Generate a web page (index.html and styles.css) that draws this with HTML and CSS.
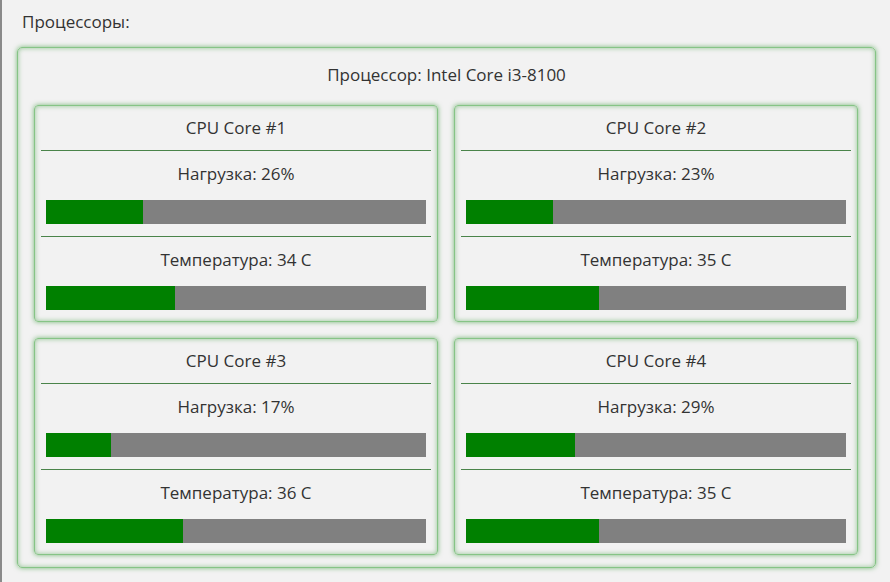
FILE: index.html
```html
<!DOCTYPE html>
<html lang="ru">
<head>
<meta charset="utf-8">
<link rel="stylesheet" href="styles.css">
</head>
<body>
<div class="page">
  <div class="heading">Процессоры:</div>
  <div class="cpu">
    <div class="cpu-title">Процессор: Intel Core i3-8100</div>
    <div class="cores">
      <div class="core">
        <div class="core-title">CPU Core #1</div>
        <div class="metric">
          <div class="label">Нагрузка: 26%</div>
          <div class="bar"><div class="fill" style="width:25.5%"></div></div>
        </div>
        <div class="metric">
          <div class="label">Температура: 34 C</div>
          <div class="bar"><div class="fill" style="width:34%"></div></div>
        </div>
      </div>
      <div class="core">
        <div class="core-title">CPU Core #2</div>
        <div class="metric">
          <div class="label">Нагрузка: 23%</div>
          <div class="bar"><div class="fill" style="width:23%"></div></div>
        </div>
        <div class="metric">
          <div class="label">Температура: 35 C</div>
          <div class="bar"><div class="fill" style="width:35%"></div></div>
        </div>
      </div>
      <div class="core">
        <div class="core-title">CPU Core #3</div>
        <div class="metric">
          <div class="label">Нагрузка: 17%</div>
          <div class="bar"><div class="fill" style="width:17%"></div></div>
        </div>
        <div class="metric">
          <div class="label">Температура: 36 C</div>
          <div class="bar"><div class="fill" style="width:36%"></div></div>
        </div>
      </div>
      <div class="core">
        <div class="core-title">CPU Core #4</div>
        <div class="metric">
          <div class="label">Нагрузка: 29%</div>
          <div class="bar"><div class="fill" style="width:28.7%"></div></div>
        </div>
        <div class="metric">
          <div class="label">Температура: 35 C</div>
          <div class="bar"><div class="fill" style="width:35%"></div></div>
        </div>
      </div>
    </div>
  </div>
</div>
</body>
</html>
```

FILE: styles.css
```css
html, body {
  margin: 0;
  padding: 0;
  background: #f2f2f2;
}
body {
  font-family: "Open Sans", "Noto Sans", sans-serif;
  color: #333333;
}
.page {
  border-left: 2px solid #8a8a8a;
  min-height: 582px;
  box-sizing: border-box;
  padding: 10px 0 0 15px;
}
.heading {
  font-size: 17px;
  line-height: 24px;
  height: 37px;
  padding-left: 5px;
}
.cpu {
  width: 859px;
  box-sizing: border-box;
  border: 1px solid #86c486;
  border-radius: 5px;
  box-shadow: 0 0 5px rgba(0, 128, 0, 0.5), inset 0 0 5px rgba(0, 128, 0, 0.4);
  padding: 0 16px 12px 16px;
}
.cpu-title {
  font-size: 17px;
  line-height: 54px;
  height: 57px;
  text-align: center;
}
.cores {
  display: grid;
  grid-template-columns: 404px 404px;
  column-gap: 16px;
  row-gap: 16px;
}
.core {
  box-sizing: border-box;
  height: 217px;
  border: 1px solid #86c486;
  border-radius: 4px;
  box-shadow: 0 0 5px rgba(0, 128, 0, 0.5), inset 0 0 5px rgba(0, 128, 0, 0.4);
  padding: 0 6px;
}
.core-title {
  font-size: 17px;
  line-height: 44px;
  height: 44px;
  text-align: center;
  border-bottom: 1px solid #4a844a;
}
.metric {
  padding-bottom: 12px;
}
.metric + .metric {
  border-top: 1px solid #4a844a;
  padding-bottom: 0;
}
.label {
  font-size: 17px;
  line-height: 46px;
  text-align: center;
}
.bar {
  margin: 3px 5px 0 5px;
  height: 24px;
  background: #808080;
  display: flex;
}
.fill {
  height: 100%;
  background: #008000;
}
```
